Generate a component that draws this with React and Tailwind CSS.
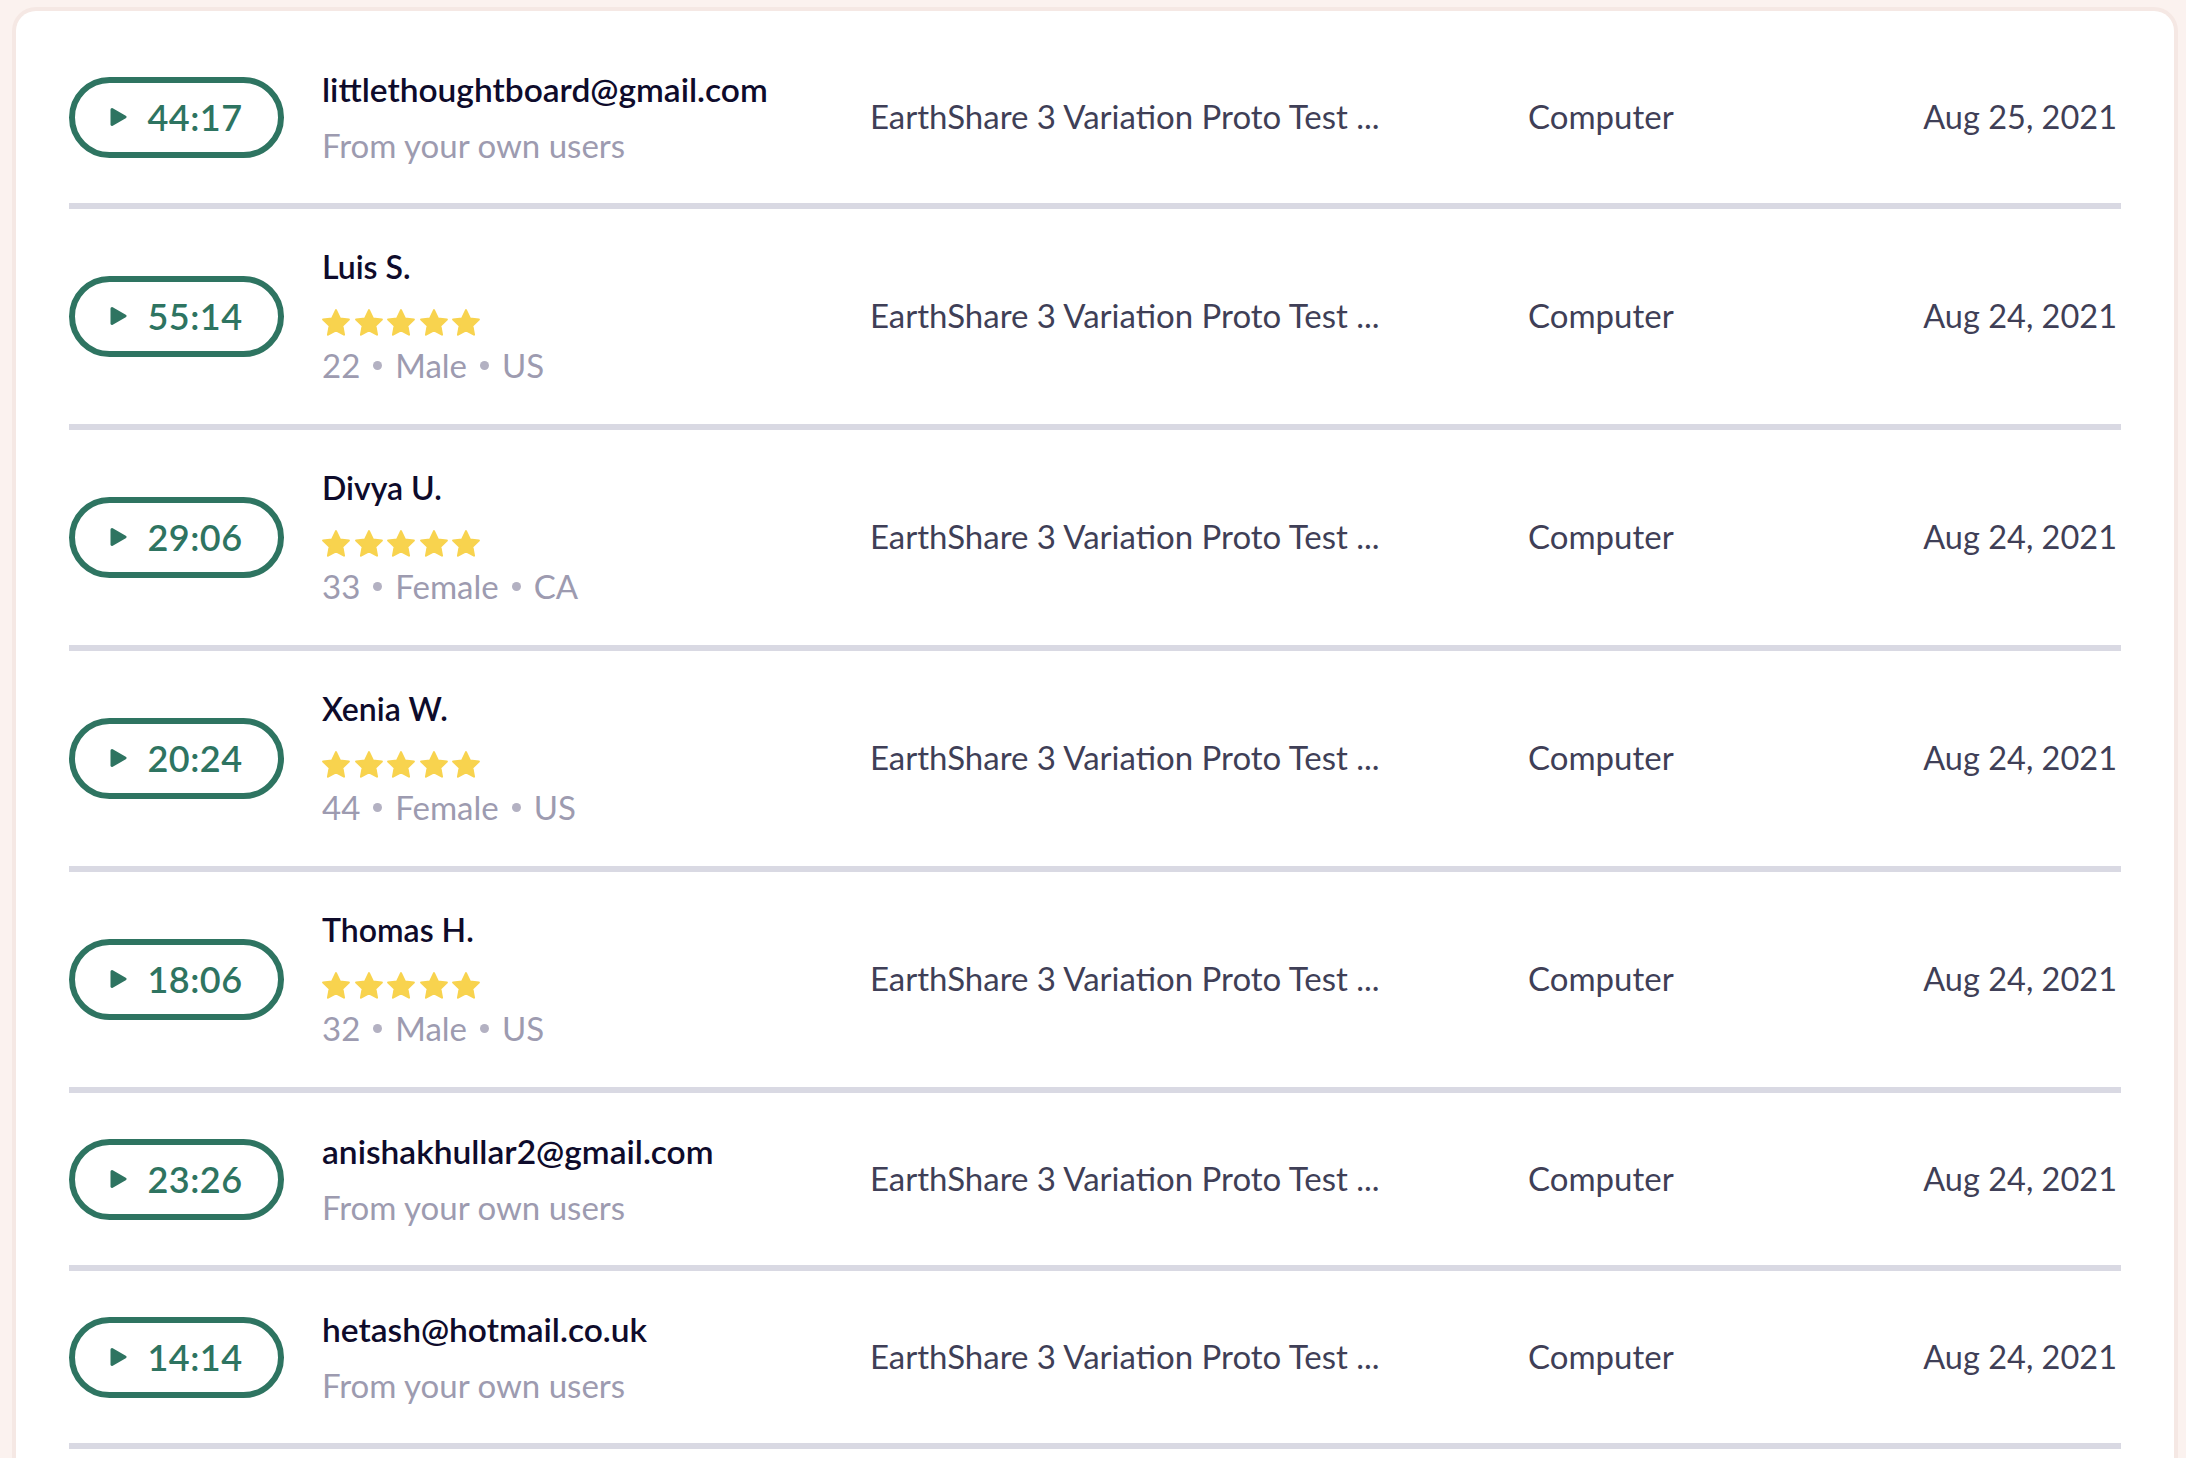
import React from "react";

const rows = [
  { time: "44:17", kind: "email", name: "littlethoughtboard@gmail.com", date: "Aug 25, 2021" },
  { time: "55:14", kind: "tester", name: "Luis S.", age: "22", gender: "Male", country: "US", date: "Aug 24, 2021" },
  { time: "29:06", kind: "tester", name: "Divya U.", age: "33", gender: "Female", country: "CA", date: "Aug 24, 2021" },
  { time: "20:24", kind: "tester", name: "Xenia W.", age: "44", gender: "Female", country: "US", date: "Aug 24, 2021" },
  { time: "18:06", kind: "tester", name: "Thomas H.", age: "32", gender: "Male", country: "US", date: "Aug 24, 2021" },
  { time: "23:26", kind: "email", name: "anishakhullar2@gmail.com", date: "Aug 24, 2021" },
  { time: "14:14", kind: "email", name: "hetash@hotmail.co.uk", date: "Aug 24, 2021" },
];

function Star() {
  return (
    <svg width="28" height="27" viewBox="1 0.7 22 21.2" className="shrink-0">
      <path
        d="M12 1.6l3.1 6.5 7 .9-5.1 4.9 1.3 7-6.3-3.4-6.3 3.4 1.3-7L1.9 9l7-.9z"
        fill="#f8d34e"
        stroke="#f8d34e"
        strokeWidth="1.6"
        strokeLinejoin="round"
      />
    </svg>
  );
}

function TimeButton({ time }) {
  return (
    <div className="shrink-0 w-[215px] h-[81px] rounded-full border-[6px] border-[#2e7461] flex items-center justify-center gap-[20px]">
      <svg width="17" height="20" viewBox="0 0 17 20">
        <path d="M2 2.5 L15 10 L2 17.5 Z" fill="#2e7461" stroke="#2e7461" strokeWidth="3" strokeLinejoin="round" />
      </svg>
      <span className="text-[36px] font-semibold text-[#2e7461] leading-none tracking-[0.5px]">{time}</span>
    </div>
  );
}

function Row({ r }) {
  const isEmail = r.kind === "email";
  return (
    <div className="border-b-[6px] border-[#d9d9e3]">
      <div className={`flex items-center ${isEmail ? "py-[30px]" : "pt-[34px] pb-[35px]"}`}>
        <TimeButton time={r.time} />
        <div className="ml-[38px] w-[548px] shrink-0">
          {isEmail ? (
            <>
              <div className="text-[33.5px] leading-[56px] font-semibold text-[#0e0b2b]">{r.name}</div>
              <div className="text-[33px] leading-[56px] text-[#9d9bb0]">From your own users</div>
            </>
          ) : (
            <>
              <div className="text-[32px] leading-[48px] font-semibold text-[#0e0b2b]">{r.name}</div>
              <div className="flex gap-[4.5px] mt-[18px] mb-[5px]">
                <Star />
                <Star />
                <Star />
                <Star />
                <Star />
              </div>
              <div className="text-[33px] leading-[48px] text-[#9d9bb0] flex items-center">
                <span>{r.age}</span>
                <span className="mx-[13px] w-[9px] h-[9px] rounded-full bg-[#b3b1c2]"></span>
                <span>{r.gender}</span>
                <span className="mx-[13px] w-[9px] h-[9px] rounded-full bg-[#b3b1c2]"></span>
                <span>{r.country}</span>
              </div>
            </>
          )}
        </div>
        <div className="w-[658px] shrink-0 text-[33px] text-[#3f3f57]">EarthShare 3 Variation Proto Test ...</div>
        <div className="flex-1 text-[33px] text-[#3f3f57]">Computer</div>
        <div className="pr-[4px] text-[32.5px] text-[#3f3f57] text-right">{r.date}</div>
      </div>
    </div>
  );
}

export default function App() {
  return (
    <div
      className="min-h-screen bg-[#fbf2ef] pt-[7px] pl-[12px] pr-[8px]"
      style={{ fontFamily: "Lato, 'Noto Sans', sans-serif" }}
    >
      <div className="bg-white border-[4px] border-b-0 border-[#f5e8e4] rounded-t-[24px] px-[53px] pt-[20px] h-[1460px] overflow-hidden">
        {rows.map((r, i) => (
          <Row key={i} r={r} />
        ))}
      </div>
    </div>
  );
}
